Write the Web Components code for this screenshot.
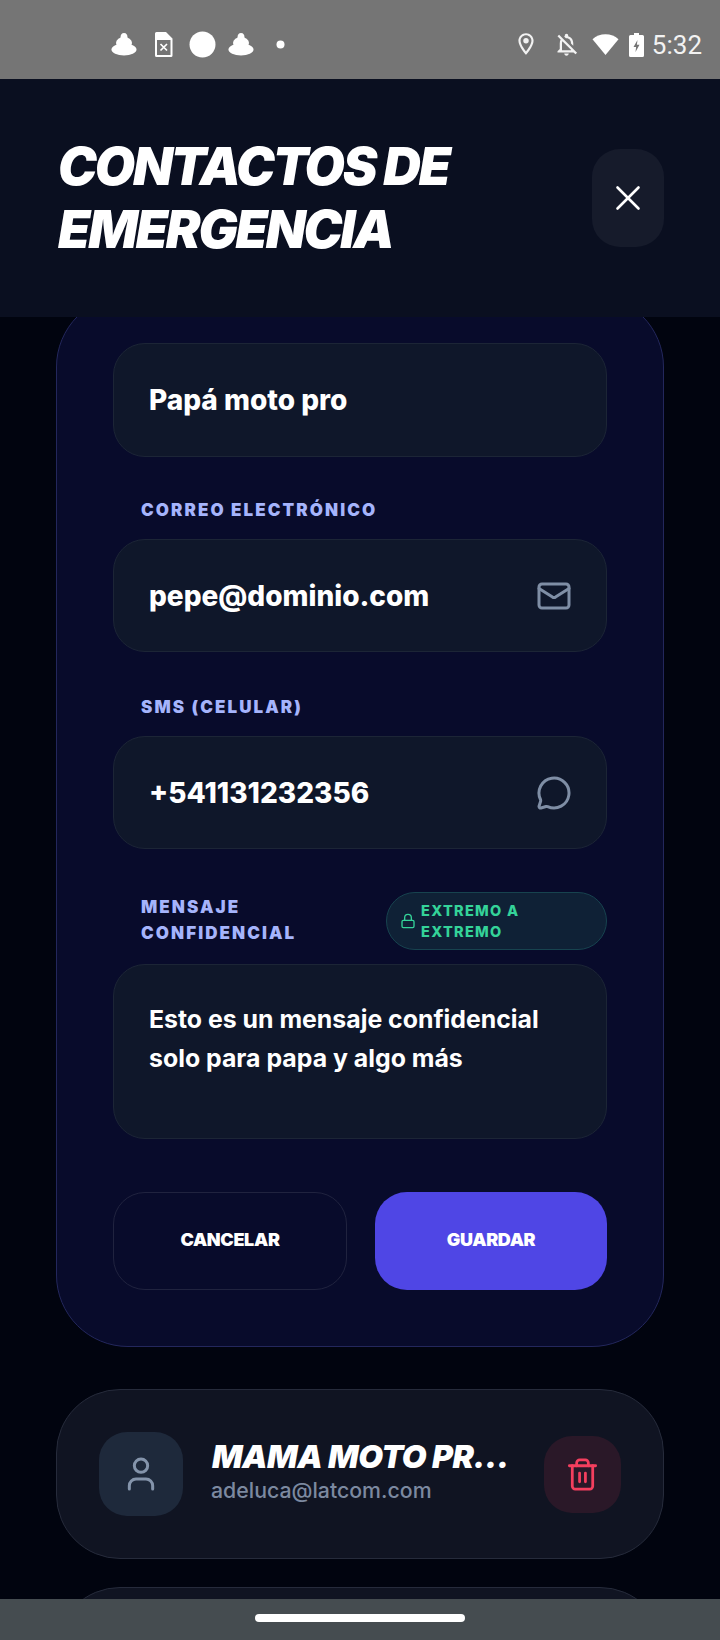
<!doctype html>
<html lang="es">
<head>
<meta charset="utf-8">
<title>Contactos de emergencia</title>
<style>
  html, body { margin: 0; background: #01040f; }
</style>
</head>
<body>
<pantalla-contactos>
  <barra-estado slot="estado"></barra-estado>
  <cabecera-modal slot="cabecera">CONTACTOS DE EMERGENCIA</cabecera-modal>

  <form-contacto>
    <campo-form valor="Papá moto pro"></campo-form>
    <campo-form etiqueta="CORREO ELECTRÓNICO" valor="pepe@dominio.com" icono="correo"></campo-form>
    <campo-form etiqueta="SMS (CELULAR)" valor="+541131232356" icono="sms"></campo-form>
    <campo-mensaje etiqueta="MENSAJE CONFIDENCIAL">Esto es un mensaje confidencial solo para papa y algo más</campo-mensaje>
  </form-contacto>

  <fila-contacto nombre="MAMA MOTO PR…" correo="adeluca@latcom.com"></fila-contacto>
  <fila-contacto vacia></fila-contacto>

  <barra-inicio slot="inicio"></barra-inicio>
</pantalla-contactos>

<script>
const ICONOS = {
  correo: `<path d="m22 7-8.99 5.73a2 2 0 0 1-2.02 0L2 7"/><rect x="2" y="4" width="20" height="16" rx="2"/>`,
  sms: `<path d="M2.992 16.342a2 2 0 0 1 .094 1.167l-1.065 3.29a1 1 0 0 0 1.236 1.168l3.413-.998a2 2 0 0 1 1.099.092 10 10 0 1 0-4.777-4.719"/>`,
  candado: `<rect x="3" y="11" width="18" height="11" rx="2"/><path d="M7 11V7a5 5 0 0 1 10 0v4"/>`,
  usuario: `<path d="M19 21v-2a4 4 0 0 0-4-4H9a4 4 0 0 0-4 4v2"/><circle cx="12" cy="7" r="4"/>`,
  basura: `<path d="M3 6h18"/><path d="M19 6v14c0 1-1 2-2 2H7c-1 0-2-1-2-2V6"/><path d="M8 6V4c0-1 1-2 2-2h4c1 0 2 1 2 2v2"/><path d="M10 11v6"/><path d="M14 11v6"/>`,
  cerrar: `<path d="M18 6 6 18"/><path d="m6 6 12 12"/>`,
};

const icono = (nombre, tam, trazo = 2) =>
  `<svg width="${tam}" height="${tam}" viewBox="0 0 24 24" fill="none" stroke="currentColor" stroke-width="${trazo}" stroke-linecap="round" stroke-linejoin="round">${ICONOS[nombre]}</svg>`;

const FUENTE = `Inter, "Liberation Sans", sans-serif`;

class PantallaContactos extends HTMLElement {
  constructor() {
    super();
    this.attachShadow({ mode: "open" }).innerHTML = `
      <style>
        :host {
          display: flex;
          flex-direction: column;
          height: 1640px;
          overflow: hidden;
          background: #01040f;
          font-family: ${FUENTE};
        }

        .scroll {
          flex: 1;
          min-height: 0;
          overflow: hidden;
        }

        .lista {
          display: flex;
          flex-direction: column;
          gap: 28px;
          margin-top: -22px;
          padding: 0 56px;
        }
      </style>
      <slot name="estado"></slot>
      <slot name="cabecera"></slot>
      <div class="scroll"><div class="lista"><slot></slot></div></div>
      <slot name="inicio"></slot>
    `;
  }
}

class BarraEstado extends HTMLElement {
  constructor() {
    super();
    const gorro = `<svg width="26" height="23" viewBox="0 0 26 23" fill="#fff"><ellipse cx="13" cy="16.500" rx="12.500" ry="6"/><ellipse cx="13" cy="10" rx="8" ry="6"/><ellipse cx="13" cy="4.500" rx="3.500" ry="4.500"/></svg>`;
    this.attachShadow({ mode: "open" }).innerHTML = `
      <style>
        :host {
          display: flex;
          align-items: center;
          height: 79px;
          padding: 0 18px 0 111px;
          box-sizing: border-box;
          background: #757575;
          color: #f2f2f2;
        }

        .izq, .der {
          display: flex;
          align-items: center;
          padding-top: 10px;
        }

        .der { margin-left: auto; }

        svg { display: block; flex-shrink: 0; }

        .hora {
          margin-left: 8px;
          font: 400 26px/1 Roboto, sans-serif;
        }
      </style>
      <div class="izq">
        ${gorro}
        <svg style="margin-left:18px" width="18" height="25" viewBox="0 0 18 25"><path fill="#fff" fill-rule="evenodd" d="M1.500 0H11l6.500 6.500V23.500a1.500 1.500 0 0 1-1.500 1.500H1.500A1.500 1.500 0 0 1 0 23.500V1.500A1.500 1.500 0 0 1 1.500 0zM2 8v15h13.500V8z"/><path stroke="#fff" stroke-width="1.700" d="M5.500 12l6.500 6.500M12 12l-6.500 6.500"/></svg>
        <svg style="margin-left:16px" width="27" height="27" viewBox="0 0 27 27"><circle cx="13.500" cy="13.500" r="13" fill="#fff"/></svg>
        <span style="margin-left:12px;display:block">${gorro}</span>
        <svg style="margin-left:22px" width="9" height="9" viewBox="0 0 9 9"><circle cx="4.500" cy="4.500" r="4" fill="#fff"/></svg>
      </div>
      <div class="der">
        <svg width="26" height="26" style="margin-top:-2px" viewBox="0 0 24 24" fill="#f2f2f2"><path d="M12 2C8.130 2 5 5.130 5 9c0 5.250 7 13 7 13s7-7.750 7-13c0-3.870-3.130-7-7-7zM7 9c0-2.760 2.240-5 5-5s5 2.240 5 5c0 2.880-2.880 7.190-5 9.880C9.920 16.210 7 11.850 7 9z"/><circle cx="12" cy="9" r="2.500"/></svg>
        <svg style="margin-left:14px" width="27" height="27" viewBox="0 0 24 24" fill="#f2f2f2"><path d="M12 22c1.100 0 2-.9 2-2h-4c0 1.100.9 2 2 2zm0-15.500c2.490 0 4 2.020 4 4.500v.1l2 2V11c0-3.070-1.630-5.640-4.500-6.320V4c0-.83-.67-1.500-1.500-1.500s-1.500.67-1.500 1.500v.68c-.24.06-.47.15-.69.23l1.640 1.640c.18-.02.36-.05.55-.05zM5.410 3.350L4 4.760l2.810 2.810C6.290 8.570 6 9.740 6 11v5l-2 2v1h14.240l1.740 1.740 1.410-1.410L5.410 3.350zM16 17H8v-6c0-.68.12-1.320.34-1.900L16 16.760V17z"/></svg>
        <svg style="margin-left:12px" width="27" height="21" viewBox="0 0 27 21" fill="#fff"><path d="M13.500 21 .5 5.200C4 2 8.500.2 13.500.2S23 2 26.500 5.200z"/></svg>
        <svg style="margin-left:10px" width="15" height="24" viewBox="0 0 15 24"><path fill="#fff" d="M5 0h5v2h3.500A1.500 1.500 0 0 1 15 3.500v19a1.500 1.500 0 0 1-1.500 1.500h-12A1.500 1.500 0 0 1 0 22.500v-19A1.500 1.500 0 0 1 1.500 2H5z"/><path fill="#757575" d="M8.500 7 4.500 14h2.600L6.500 19l4-7.200H7.900z"/></svg>
        <span class="hora">5:32</span>
      </div>
    `;
  }
}

class CabeceraModal extends HTMLElement {
  constructor() {
    super();
    this.attachShadow({ mode: "open" }).innerHTML = `
      <style>
        :host {
          position: relative;
          z-index: 2;
          display: flex;
          align-items: center;
          justify-content: space-between;
          height: 238px;
          padding: 0 56px 0 58px;
          box-sizing: border-box;
          background: #0a0f20;
        }

        h1 {
          width: 420px;
          margin: 0;
          color: #fff;
          font-size: 52px;
          line-height: 63px;
          font-weight: 900;
          font-style: italic;
          letter-spacing: -0.042em;
        }

        .cerrar {
          display: grid;
          place-items: center;
          width: 72px;
          height: 98px;
          border-radius: 28px;
          background: #161b2b;
          color: #fff;
        }
      </style>
      <h1><slot></slot></h1>
      <div class="cerrar">${icono("cerrar", 42, 1.5)}</div>
    `;
  }
}

class FormContacto extends HTMLElement {
  constructor() {
    super();
    this.attachShadow({ mode: "open" }).innerHTML = `
      <style>
        :host {
          display: block;
          margin-bottom: 14px;
          padding: 47px 56px 56px;
          border: 1px solid #23275c;
          border-radius: 72px;
          background: #080b2b;
        }

        .acciones {
          display: grid;
          grid-template-columns: 234px 1fr;
          gap: 28px;
          margin-top: 53px;
        }

        .boton {
          display: flex;
          align-items: center;
          justify-content: center;
          height: 98px;
          padding-bottom: 3px;
          box-sizing: border-box;
          border-radius: 32px;
          color: #fff;
          font-size: 18px;
          font-weight: 900;
          letter-spacing: -0.02em;
        }

        .cancelar { border: 1px solid #20233f; }
        .guardar { background: #4f46e5; }
      </style>
      <slot></slot>
      <div class="acciones">
        <div class="boton cancelar">CANCELAR</div>
        <div class="boton guardar">GUARDAR</div>
      </div>
    `;
  }
}

class CampoForm extends HTMLElement {
  constructor() {
    super();
    const etiqueta = this.getAttribute("etiqueta");
    const nombreIcono = this.getAttribute("icono");
    this.attachShadow({ mode: "open" }).innerHTML = `
      <style>
        :host {
          display: block;
          margin-top: 42px;
        }

        :host(:first-child) {
          margin-top: 0;
          margin-bottom: -2px;
        }

        label {
          display: block;
          margin: 0 0 16px 28px;
          color: #a5b4fc;
          font-size: 17px;
          line-height: 26px;
          font-weight: 900;
          letter-spacing: 0.122em;
        }

        .caja {
          display: flex;
          align-items: center;
          justify-content: space-between;
          height: 113px;
          padding: 0 36px 0 35px;
          box-sizing: border-box;
          border: 1px solid #1c2536;
          border-radius: 32px;
          background: #0f172a;
          color: #fff;
          font-size: 28px;
          font-weight: 800;
        }

        :host(:first-child) .caja { height: 114px; }

        svg { display: block; color: #7f8ea5; margin-right: -2px; }
      </style>
      ${etiqueta ? `<label>${etiqueta}</label>` : ""}
      <div class="caja">
        <span>${this.getAttribute("valor")}</span>
        ${nombreIcono ? icono(nombreIcono, 36, 2) : ""}
      </div>
    `;
  }
}

class CampoMensaje extends HTMLElement {
  constructor() {
    super();
    this.attachShadow({ mode: "open" }).innerHTML = `
      <style>
        :host {
          display: block;
          margin-top: 43px;
        }

        .cabeza {
          display: flex;
          align-items: center;
          justify-content: space-between;
          gap: 16px;
          margin-bottom: 14px;
        }

        label {
          width: 200px;
          margin: -2px 0 0 28px;
          color: #a5b4fc;
          font-size: 17px;
          line-height: 26px;
          font-weight: 900;
          letter-spacing: 0.122em;
        }

        .seguro {
          display: flex;
          align-items: center;
          gap: 5px;
          width: 221px;
          height: 58px;
          padding-left: 13px;
          box-sizing: border-box;
          border: 1px solid #17434f;
          border-radius: 999px;
          background: #0f2136;
          color: #34d399;
          font-size: 14.500px;
          line-height: 21px;
          font-weight: 800;
          letter-spacing: 0.09em;
        }

        .seguro svg { display: block; flex-shrink: 0; }
        .seguro span { width: 120px; }

        .caja {
          height: 175px;
          padding: 35px 35px 0;
          box-sizing: border-box;
          border: 1px solid #1c2536;
          border-radius: 32px;
          background: #0f172a;
          color: #fff;
          font-size: 24.850px;
          line-height: 39px;
          font-weight: 700;
        }
      </style>
      <div class="cabeza">
        <label>${this.getAttribute("etiqueta")}</label>
        <div class="seguro">${icono("candado", 16, 2)}<span>EXTREMO A EXTREMO</span></div>
      </div>
      <div class="caja"><slot></slot></div>
    `;
  }
}

class FilaContacto extends HTMLElement {
  constructor() {
    super();
    const vacia = this.hasAttribute("vacia");
    this.attachShadow({ mode: "open" }).innerHTML = `
      <style>
        :host {
          display: flex;
          align-items: center;
          gap: 29px;
          height: 170px;
          flex-shrink: 0;
          padding: 0 42px 0 42px;
          box-sizing: border-box;
          border: 1px solid #262b3b;
          border-radius: 64px;
          background: #101422;
        }

        .avatar {
          display: grid;
          place-items: center;
          flex-shrink: 0;
          width: 84px;
          height: 84px;
          border-radius: 28px;
          background: #1e293b;
          color: #8494ab;
        }

        .datos {
          flex: 1;
          min-width: 0;
          margin-top: -6px;
        }

        .nombre {
          color: #fff;
          font-size: 32px;
          line-height: 38px;
          font-weight: 900;
          font-style: italic;
          letter-spacing: -0.015em;
          white-space: nowrap;
        }

        .correo {
          margin-left: -1px;
          color: #7c89a0;
          font-size: 21.300px;
          line-height: 28px;
          font-weight: 500;
        }

        .borrar {
          display: grid;
          place-items: center;
          flex-shrink: 0;
          width: 77px;
          height: 77px;
          border-radius: 28px;
          background: #2a1828;
          color: #f43f5e;
        }
      </style>
      ${vacia ? "" : `
        <div class="avatar">${icono("usuario", 40, 1.8)}</div>
        <div class="datos">
          <div class="nombre">${this.getAttribute("nombre")}</div>
          <div class="correo">${this.getAttribute("correo")}</div>
        </div>
        <div class="borrar">${icono("basura", 35, 1.9)}</div>
      `}
    `;
  }
}

class BarraInicio extends HTMLElement {
  constructor() {
    super();
    this.attachShadow({ mode: "open" }).innerHTML = `
      <style>
        :host {
          position: relative;
          z-index: 2;
          display: flex;
          justify-content: center;
          height: 41px;
          padding-top: 15px;
          box-sizing: border-box;
          background: #454c50;
        }

        .pill {
          width: 210px;
          height: 8px;
          border-radius: 4px;
          background: #fff;
        }
      </style>
      <div class="pill"></div>
    `;
  }
}

customElements.define("pantalla-contactos", PantallaContactos);
customElements.define("barra-estado", BarraEstado);
customElements.define("cabecera-modal", CabeceraModal);
customElements.define("form-contacto", FormContacto);
customElements.define("campo-form", CampoForm);
customElements.define("campo-mensaje", CampoMensaje);
customElements.define("fila-contacto", FilaContacto);
customElements.define("barra-inicio", BarraInicio);
</script>
</body>
</html>
